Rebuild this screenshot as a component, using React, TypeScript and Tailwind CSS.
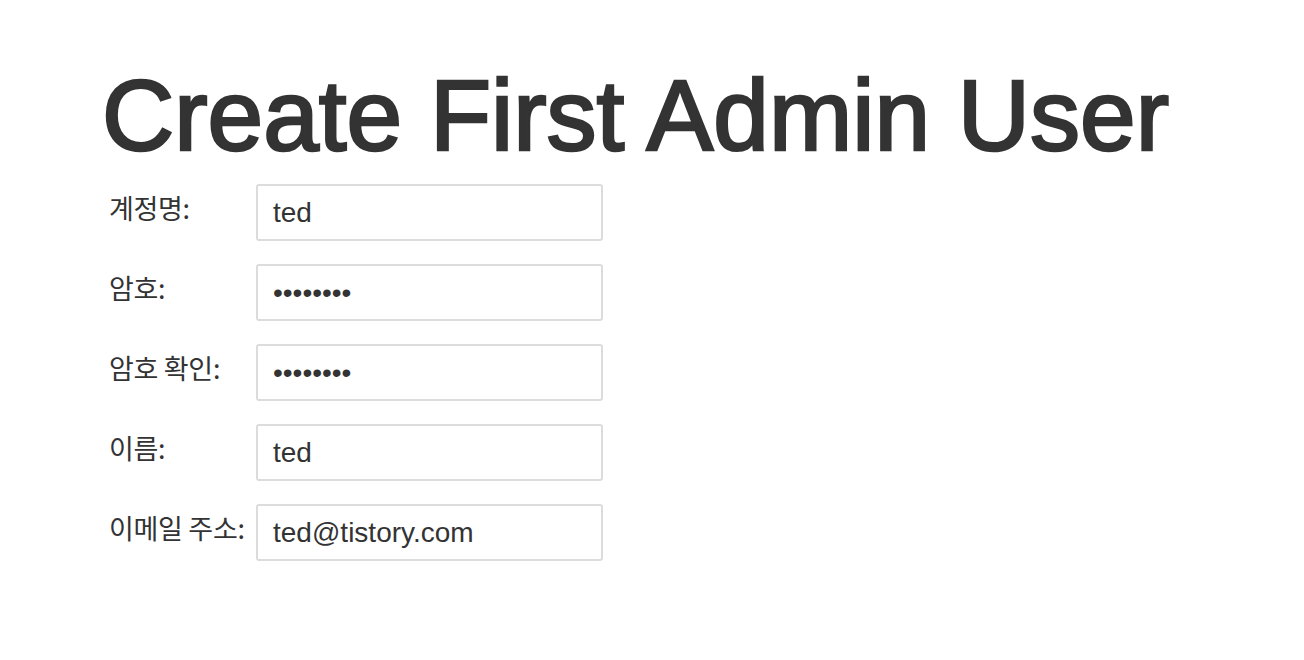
import React from "react";

const rows: { label: string; value: string; type: string }[] = [
  { label: "계정명:", value: "ted", type: "text" },
  { label: "암호:", value: "abcdefgh", type: "password" },
  { label: "암호 확인:", value: "abcdefgh", type: "password" },
  { label: "이름:", value: "ted", type: "text" },
  { label: "이메일 주소:", value: "ted@tistory.com", type: "text" },
];

export default function App() {
  return (
    <div className="min-h-[660px] w-full bg-white text-[#333] pl-[102px] pt-[60px]" style={{ fontFamily: '"Liberation Sans", Arial, sans-serif' }}>
      <h1 className="text-[100px] leading-[110px] font-normal m-0 [-webkit-text-stroke:2.6px_#333] [paint-order:stroke_fill]">Create First Admin User</h1>
      <form className="mt-[14px] flex flex-col gap-[23px]">
        {rows.map((r) => (
          <div key={r.label} className="flex items-start">
            <label
              className="w-[154px] pl-[7px] pt-[5px] text-[27px] leading-[38px] text-[#333] tracking-[-0.3px]"
              style={{ fontFamily: '"Noto Sans CJK KR", "Noto Sans", sans-serif' }}
            >
              {r.label}
            </label>
            <input
              type={r.type}
              value={r.value}
              readOnly
              className="w-[347px] h-[57px] border-2 border-[#dcdcdc] rounded-[3px] px-[15px] text-[28px] text-[#333] outline-none bg-white"
              style={{ fontFamily: '"Liberation Sans", Arial, sans-serif' }}
            />
          </div>
        ))}
      </form>
    </div>
  );
}
